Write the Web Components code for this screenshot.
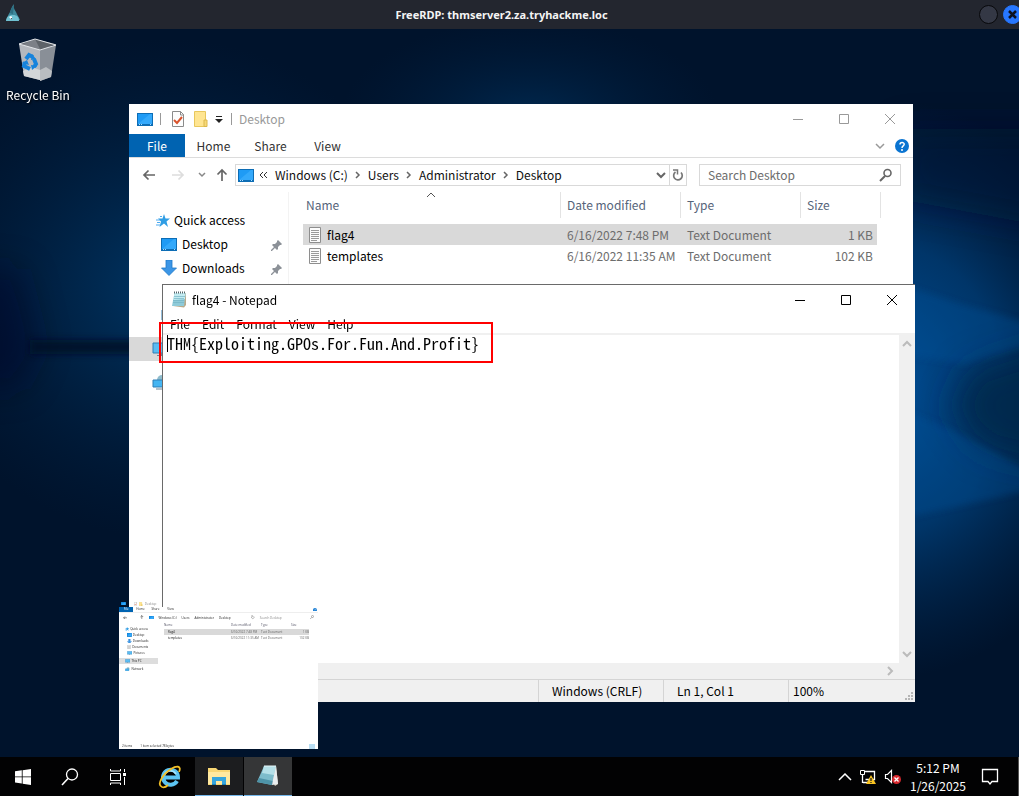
<!DOCTYPE html>
<html lang="en">
<head>
<meta charset="utf-8">
<title>FreeRDP: thmserver2.za.tryhackme.loc</title>
<style>
  html, body { height: 100%; margin: 0; }
  body {
    overflow: hidden;
    font: 12px/16px "Noto Sans CJK SC", "Open Sans", sans-serif;
    color: #000;
    background: #000;
  }
</style>
</head>
<body>
<rdp-session></rdp-session>

<script>
const icons = {
  kali: [16, 18, `<path d="M2 16c0-4 2-6 3-8 1-3 2-6 4-8-1 4 1 6 2 8 1 3 3 5 4 8z" fill="#3f8a9c"/><path d="M5 9c1-4 2-6 4-8 0 4-1 6-1 9z" fill="#2d6f82"/><path d="M1 17c0-4 3-6 7-6s6 2 6 6z" fill="#6fc0d0"/><path d="M4 13l3 3v-3l-1-1z" fill="#fff"/><path d="M6 14l1 2v-2z" fill="#222"/>`],
  bin: [42, 44, `<path d="M3 6L18 1l20 5-14 7z" fill="#5d6268"/><path d="M18 1l6 12-20-6z" fill="#7c8087"/><path d="M2 6l21 6v30L7 38z" fill="#b4b8be"/><path d="M23 12l16-5-5 32-11 4z" fill="#898f97"/><path d="M6 33l8-4 9 3v10L7 38z" fill="#d3d6d8"/><path d="M23 32l6-3 6 4-1 6-11 4z" fill="#b9bdc1"/><path d="M2 6L18 1l21 6-16 5z" fill="none" stroke="#e4e7ea" stroke-width="1"/><g fill="none" stroke="#1683dc" stroke-width="4"><path d="M9 21l3-4 4 2"/><path d="M17 21l2 5-2 3"/><path d="M8 24l-1 4 6 3"/></g><path d="M15 16l4 5-5 1zM20 28l-5 4-1-5zM5 25l5-3 2 5z" fill="#1683dc"/>`],
  desktop: [16, 13, `<path d="M0 0h16v13H0z" fill="#0d6db5"/><path d="M1 1h14v10H1z" fill="#1f9bf5"/><path d="M1 11L13 1h2v10z" fill="#34a9fb"/><path d="M2 11h1v1H2zM4 11h1v1H4zM13 11h1v1h-1z" fill="#a9dcff"/>`],
  check: [14, 16, `<path d="M1.500.5h8l3 3v12h-11z" fill="#fdfdfd" stroke="#8b8b8b"/><path d="M9.500.5v3.500h3.500" fill="none" stroke="#8b8b8b"/><path d="M3 9l3 3 5-6" fill="none" stroke="#d9532c" stroke-width="2"/>`],
  folder: [14, 16, `<path d="M.5.500h11v15H.5z" fill="#ffe591" stroke="#e8c75c"/><path d="M10 9h3v6.500h-3z" fill="#f7d978" stroke="#dcb84d"/>`],
  more: [8, 8, `<path d="M1 1.500h6" stroke="#222"/><path d="M0 4h8L4 8z" fill="#222"/>`],
  min: [12, 12, `<path d="M1 6.500h10" stroke="currentColor"/>`],
  max: [12, 12, `<path d="M1.500 1.500h9v9h-9z" fill="none" stroke="currentColor"/>`],
  close: [12, 12, `<path d="M1 1l10 10M11 1L1 11" stroke="currentColor"/>`],
  back: [14, 12, `<path d="M13 6H2M6.500 1.500L2 6l4.500 4.500" fill="none" stroke="currentColor" stroke-width="1.700"/>`],
  forward: [14, 12, `<path d="M1 6h11M7.500 1.500L12 6l-4.500 4.500" fill="none" stroke="currentColor" stroke-width="1.700"/>`],
  up: [12, 14, `<path d="M6 13V2M1.500 6.500L6 2l4.500 4.500" fill="none" stroke="currentColor" stroke-width="1.700"/>`],
  down: [10, 8, `<path d="M1 2l4 4 4-4" fill="none" stroke="currentColor" stroke-width="2"/>`],
  downThin: [10, 8, `<path d="M1 2l4 4 4-4" fill="none" stroke="currentColor" stroke-width="1.500"/>`],
  recent: [8, 6, `<path d="M1 1l3 3 3-3" fill="none" stroke="currentColor" stroke-width="1.500"/>`],
  right: [6, 8, `<path d="M1 1l3 3-3 3" fill="none" stroke="currentColor" stroke-width="1.500"/>`],
  scrollRight: [8, 10, `<path d="M1 1l4 4-4 4" fill="none" stroke="currentColor" stroke-width="2"/>`],
  scrollUp: [10, 8, `<path d="M1 6l4-4 4 4" fill="none" stroke="currentColor" stroke-width="2"/>`],
  sort: [10, 6, `<path d="M1 5l4-4 4 4" fill="none" stroke="#555"/>`],
  dblLeft: [9, 8, `<path d="M4 1L1 4l3 3M8 1L5 4l3 3" fill="none" stroke="#333"/>`],
  refresh: [12, 14, `<path d="M3.500 4A4.300 4.300 0 1 0 9 4.500" fill="none" stroke="#777" stroke-width="1.700"/><path d="M1 2h4.500v4.500" fill="none" stroke="#777" stroke-width="1.500"/>`],
  search: [14, 14, `<circle cx="8.500" cy="5" r="3.500" fill="none" stroke="#666" stroke-width="1.600"/><path d="M6 8l-5 5" stroke="#666" stroke-width="2"/>`],
  star: [14, 13, `<path d="M8 0l1.500 4.500H14l-3.500 3L12 13 8 9.500 3.500 13 5 7.500 2 4.500h4.500z" fill="#2f9de4"/><path d="M0 6h4M1 8.500h3M0 11h4M4 2.500h2" stroke="#4caaf0"/>`],
  arrow: [16, 16, `<path d="M5 0h6v8h4.500L8 15.500.5 8H5z" fill="#3c96e6" stroke="#1f78c8" stroke-width=".8"/>`],
  pin: [12, 12, `<path d="M7 1l4 4-1 1-1 0-2 2 0 2-1 1-5-5 1-1h2l2-2 0-1z" fill="#8c9198"/><path d="M4 8l-4 4" stroke="#8c9198" stroke-width="1.300"/>`],
  pc: [18, 15, `<path d="M1 1h16v10H1z" fill="#5bbcf2" stroke="#2f7fb6"/><path d="M8 11h2v2H8zM5 13h8v1H5z" fill="#6d8496"/>`],
  network: [18, 16, `<circle cx="10" cy="6" r="5" fill="#8fbccc"/><path d="M1 6h12v7H1z" fill="#45b5f2" stroke="#2f7fb6"/><path d="M4 15h7" stroke="#6d8496"/>`],
  text: [14, 16, `<path d="M1.500.5h11v15h-11z" fill="#fcfcfc" stroke="#8e8e8e"/><path d="M3 3.500h8M3 5.500h8M3 7.500h8M3 9.500h8M3 11.500h8M3 13.500h6" stroke="#9a9a9a"/>`],
  help: [14, 14, `<circle cx="7" cy="7" r="7" fill="#0a74d1"/><path d="M5 5.500C5 3 9.200 3 9.200 5.300 9.200 7 7 6.800 7 9" fill="none" stroke="#fff" stroke-width="1.500"/><circle cx="7" cy="11" r="1" fill="#fff"/>`],
  note: [16, 17, `<path d="M4 2h11v12l-2 2.500L2 15z" fill="#b8a98a"/><path d="M3.500 2h11L13 15H1z" fill="#8fcbd9"/><path d="M3.500 2h11L14 8 2.500 9z" fill="#c3ebf1"/><path d="M3 5.500h11M3 7.500h10M2 9.500h11M2 11.500h11" stroke="#74b4c4" stroke-width=".7"/><path d="M3 1.500h12" stroke="#55656a" stroke-width="2" stroke-dasharray="1 1"/>`],
  windows: [16, 16, `<path d="M0 2.300l6.800-1v6.200H0zM7.600 1.200L16 0v7.500H7.600zM0 8.300h6.800v6.200l-6.800-1zM7.600 8.300H16V16l-8.400-1.200z" fill="#fff"/>`],
  find: [18, 18, `<circle cx="11" cy="6.500" r="5.500" fill="none" stroke="#fff" stroke-width="1.300"/><path d="M7 10.500L1 17" stroke="#fff" stroke-width="1.600"/>`],
  tasks: [18, 16, `<path d="M1.500 4.500h10v7h-10zM1.500 0v2h10V0M1.500 16v-2h10v2M15.500 0v3M15.500 8v8" fill="none" stroke="#fff"/><path d="M14 4h3v3h-3z" fill="#fff"/>`],
  ie: [24, 24, `<path d="M19 16A7.500 7.500 0 1 1 20 12.500H7" fill="none" stroke="#5cc4f2" stroke-width="4"/><path d="M6 11a6.500 6.500 0 0 1 12-2" fill="none" stroke="#a9e4fb" stroke-width="1.500"/><path d="M4 22C-2 20 5 9 13 4c5-3 11-4 8 3M4 22c2 1 5-1 6-2" fill="none" stroke="#f2bf26" stroke-width="1.800"/>`],
  explorer: [24, 20, `<path d="M1 2h8l2 2h12v15H1z" fill="#f8d775"/><path d="M1 6h22v12H1z" fill="#ffe9a0"/><path d="M5 11h14v8h-4v-4H9v4H5z" fill="#35a5dd"/><path d="M5 18h4v1H5zM15 18h4v1h-4z" fill="#1b7fb5"/>`],
  notepad: [24, 24, `<path d="M8 2h12l2 18-3 2z" fill="#d9d3c3"/><path d="M8 2h12l-4 19L1 18z" fill="#7dbccb"/><path d="M8 2h12l-2 9-12-2z" fill="#b5e0e8"/><path d="M3 14l14 3-1 4-15-3z" fill="#4e94a8"/><path d="M20 2l2 18-6 1z" fill="#e9eef0"/><path d="M8 2h12" stroke="#e7f6f8"/>`],
  caret: [14, 8, `<path d="M1 7l6-6 6 6" fill="none" stroke="#fff" stroke-width="1.500"/>`],
  lan: [18, 16, `<path d="M5.500 2.500h10v8h-9M4 13.500h7M3.500 6v8" fill="none" stroke="#fff" stroke-width="1.300"/><path d="M1.500 1.500h4v4h-4z" fill="#000" stroke="#fff"/><path d="M12 6l5 9H7z" fill="#f8c322"/><path d="M12 9v3M12 13v1" stroke="#222" stroke-width="1.300"/>`],
  sound: [18, 16, `<path d="M1.500 5.500h2l4-4v12l-4-4h-2z" fill="none" stroke="#fff" stroke-width="1.200"/><circle cx="12.500" cy="10.500" r="4.500" fill="#d8292f"/><path d="M10.500 8.500l4 4M14.500 8.500l-4 4" stroke="#fff" stroke-width="1.300"/>`],
  notify: [18, 18, `<path d="M1.500 1.500h15v12H11l-2 2.500-2-2.500H1.500z" fill="none" stroke="#fff" stroke-width="1.300"/>`],
  grip: [9, 9, `<path d="M6 0h2v2H6zM3 3h2v2H3zM6 3h2v2H6zM0 6h2v2H0zM3 6h2v2H3zM6 6h2v2H6z" fill="#b5b5b5"/>`],
};

function define(name, html) {
  const template = document.createElement("template");
  template.innerHTML = html;
  customElements.define(name, class extends HTMLElement {
    constructor() {
      super();
      this.attachShadow({ mode: "open" });
      this.shadowRoot.appendChild(template.content.cloneNode(true));
    }
  });
}

class UiIcon extends HTMLElement {
  constructor() {
    super();
    this.attachShadow({ mode: "open" });
  }

  connectedCallback() {
    const [w, h, body] = icons[this.getAttribute("name")];
    const scale = Number(this.getAttribute("scale") || 1);
    this.shadowRoot.innerHTML = `
      <style>:host { display: inline-flex; flex: none; } svg { display: block; }</style>
      <svg width="${w * scale}" height="${h * scale}" viewBox="0 0 ${w} ${h}" aria-hidden="true">${body}</svg>`;
  }
}
customElements.define("ui-icon", UiIcon);

define("desktop-wallpaper", `
<style>
  :host { display: block; overflow: hidden; background: #00132c; }
  svg { display: block; width: 100%; height: 100%; }
</style>
<svg viewBox="0 0 1019 728" preserveAspectRatio="none" aria-hidden="true">
  <defs>
    <radialGradient id="r"><stop offset="0" stop-color="#005099"/><stop offset=".5" stop-color="#003e78" stop-opacity=".8"/><stop offset="1" stop-color="#002a55" stop-opacity="0"/></radialGradient>
    <radialGradient id="l"><stop offset="0" stop-color="#003767"/><stop offset="1" stop-color="#002347" stop-opacity="0"/></radialGradient>
    <filter id="soft" x="-50%" y="-50%" width="200%" height="200%"><feGaussianBlur stdDeviation="16"/></filter>
    <filter id="edge" x="-20%" y="-50%" width="140%" height="200%"><feGaussianBlur stdDeviation="3"/></filter>
  </defs>
  <ellipse cx="170" cy="260" rx="260" ry="250" fill="url(#l)"/>
  <ellipse cx="530" cy="90" rx="190" ry="100" fill="url(#l)" opacity=".6"/>
  <ellipse cx="880" cy="360" rx="250" ry="290" fill="url(#r)"/>
  <g filter="url(#soft)">
    <path d="M-40 240h60l20 80-20 40h-60z" fill="#001026" opacity=".4"/>
    <path d="M1060 310l-90 30-20 40 30 40 80 20z" fill="#002448" opacity=".8"/>
    <path d="M1060 100h-160v70l160 30z" fill="#001a38" opacity=".5"/>
  </g>
  <g filter="url(#edge)">
    <path d="M30 311h110v14H30z" fill="#001026" opacity=".8"/>
    <path d="M900 255l60 20 65 18v24l-60 18-65-10z" fill="#00579f" opacity=".3"/>
    <path d="M900 380l50 20 75 40v22l-125 28z" fill="#00579f" opacity=".3"/>
  </g>
</svg>`);

define("rdp-bar", `
<style>
  :host {
    display: flex;
    align-items: center;
    height: 29px;
    background: #23262f;
    color: #f4f4f4;
    font: bold 11px/16px "Noto Sans", sans-serif;
  }
  .logo { width: 19px; padding-left: 5px; }
  h1 { flex: 1; margin: 0; font: inherit; text-align: center; }
  .buttons { display: flex; gap: 5px; width: 40px; overflow: hidden; }
  button {
    display: grid;
    place-items: center;
    flex: none;
    width: 19px;
    height: 19px;
    padding: 0;
    border: 1px solid #08090c;
    border-radius: 50%;
    background: #343845;
  }
  .close { border-color: #2777ff; background: #2777ff; }
</style>
<div class="logo"><ui-icon name="kali"></ui-icon></div>
<h1>FreeRDP: thmserver2.za.tryhackme.loc</h1>
<div class="buttons">
  <button aria-label="Maximize"></button>
  <button class="close" aria-label="Close">
    <svg width="9" height="9" viewBox="0 0 9 9"><path d="M1 1l7 7M8 1L1 8" stroke="#0c1222" stroke-width="2.500"/></svg>
  </button>
</div>`);

define("desktop-icon", `
<style>
  :host { display: flex; flex-direction: column; align-items: center; gap: 5px; width: 76px; color: #fff; text-shadow: 1px 1px 2px #000; }
</style>
<ui-icon name="bin"></ui-icon>
<slot></slot>`);

define("window-buttons", `
<style>
  :host { display: flex; color: #000; }
  button { display: grid; place-items: center; width: 46px; height: 29px; padding: 0; border: 0; background: none; color: inherit; }
</style>
<button aria-label="Minimize"><ui-icon name="min"></ui-icon></button>
<button aria-label="Maximize"><ui-icon name="max"></ui-icon></button>
<button aria-label="Close"><ui-icon name="close"></ui-icon></button>`);

define("nav-item", `
<style>
  :host { display: flex; align-items: center; gap: 5px; height: 24px; padding: 0 5px 0 32px; }
  :host([top]) { gap: 4px; padding-left: 27px; }
  :host([device]) { padding-left: 23px; }
  :host([selected]) { background: #d9d9d9; }
  .label { flex: 1; }
  .pin { display: none; }
  :host([pinned]) .pin { display: block; height: 12px; }
</style>
<slot name="icon"></slot>
<span class="label"><slot></slot></span>
<span class="pin"><ui-icon name="pin"></ui-icon></span>`);

define("address-bar", `
<style>
  :host { display: flex; align-items: center; height: 34px; padding: 0 12px 0 13px; color: #666; }
  button { display: grid; place-items: center; padding: 0; border: 0; background: none; color: inherit; font: inherit; }
  .go { width: 14px; }
  .fwd { width: 14px; margin-left: 15px; color: #ddd; }
  .recent { width: 8px; margin-left: 13px; color: #888; }
  .up { width: 12px; margin-left: 10px; }
  .path {
    display: flex;
    align-items: center;
    flex: 1;
    box-sizing: border-box;
    height: 22px;
    margin: 0 12px 0 7px;
    padding-left: 2px;
    border: 1px solid #d9d9d9;
  }
  .path nav { display: flex; align-items: center; flex: 1; gap: 7px; margin-left: 5px; }
  .path a { color: #111; text-decoration: none; }
  .drop { width: 16px; }
  .reload { width: 17px; height: 20px; border-left: 1px solid #d9d9d9; }
  .search { display: flex; align-items: center; box-sizing: border-box; width: 202px; height: 22px; padding: 0 7px 0 8px; border: 1px solid #d9d9d9; }
  input { flex: 1; min-width: 0; padding: 0; border: 0; outline: 0; background: none; font: inherit; }
  input::placeholder { color: #6d6d6d; opacity: 1; }
</style>
<button class="go" aria-label="Back"><ui-icon name="back"></ui-icon></button>
<button class="fwd" aria-label="Forward"><ui-icon name="forward"></ui-icon></button>
<button class="recent" aria-label="Recent locations"><ui-icon name="recent"></ui-icon></button>
<button class="up" aria-label="Up"><ui-icon name="up"></ui-icon></button>
<div class="path">
  <ui-icon name="desktop"></ui-icon>
  <nav aria-label="Path">
    <ui-icon name="dblLeft"></ui-icon>
    <a href="#c">Windows (C:)</a>
    <ui-icon name="right"></ui-icon>
    <a href="#users">Users</a>
    <ui-icon name="right"></ui-icon>
    <a href="#administrator">Administrator</a>
    <ui-icon name="right"></ui-icon>
    <a href="#desktop">Desktop</a>
  </nav>
  <button class="drop" aria-label="Previous locations"><ui-icon name="down"></ui-icon></button>
  <button class="reload" aria-label="Refresh"><ui-icon name="refresh"></ui-icon></button>
</div>
<div class="search">
  <input type="search" aria-label="Search Desktop" placeholder="Search Desktop">
  <ui-icon name="search"></ui-icon>
</div>`);

define("file-list", `
<style>
  :host { display: block; }
  table { width: 100%; border-collapse: separate; border-spacing: 0; table-layout: fixed; color: #6d6d6d; }
  th, td { padding: 0 6px; text-align: left; font-weight: normal; white-space: nowrap; }
  th { position: relative; height: 26px; border-right: 1px solid #e3e3e3; color: #56647a; }
  th:first-child { padding-left: 3px; }
  th ui-icon { position: absolute; top: 0; left: 50%; margin-left: -6px; }
  .date, .type { width: 107px; }
  .size { width: 67px; }
  tbody::before { content: ""; display: block; height: 6px; }
  td { height: 21px; }
  td:first-child { padding-left: 5px; color: #000; }
  td:last-child { padding-right: 4px; border-right: 4px solid transparent; background-clip: padding-box; text-align: right; }
  .selected td { background-color: #d9d9d9; }
  .name { display: flex; align-items: center; gap: 5px; }
</style>
<table>
  <thead>
    <tr><th>Name<ui-icon name="sort"></ui-icon></th><th class="date">Date modified</th><th class="type">Type</th><th class="size">Size</th></tr>
  </thead>
  <tbody>
    <tr class="selected"><td><span class="name"><ui-icon name="text"></ui-icon>flag4</span></td><td>6/16/2022 7:48 PM</td><td>Text Document</td><td>1 KB</td></tr>
    <tr><td><span class="name"><ui-icon name="text"></ui-icon>templates</span></td><td>6/16/2022 11:35 AM</td><td>Text Document</td><td>102 KB</td></tr>
  </tbody>
</table>`);

define("explorer-window", `
<style>
  :host { display: flex; flex-direction: column; background: #fff; }
  header { display: flex; height: 30px; color: #999; }
  window-buttons { color: #999; }
  .quick { display: flex; align-items: center; flex: 1; padding-left: 8px; }
  .rule { width: 1px; height: 12px; margin: 0 10px 0 7px; background: #999; }
  .quick ui-icon + ui-icon { margin-left: 9px; }
  .quick .last { margin-left: 7px; }
  .last + .rule { margin: 0 7px 0 8px; }
  .tabs { display: flex; align-items: center; height: 23px; border-bottom: 1px solid #dcdcdc; color: #333; }
  .tabs button { height: 23px; padding: 0; border: 0; background: none; color: inherit; font: inherit; width: 57px; }
  .tabs .file { width: 56px; background: #0063b1; color: #fff; }
  .tabs .end { display: flex; align-items: center; gap: 10px; margin: 0 4px 0 auto; color: #999; }
  .main { display: flex; flex: 1; }
  aside { width: 159px; padding-top: 16px; border-right: 1px solid #f3f3f3; }
  aside hr { height: 9px; margin: 0; border: 0; }
  file-list { flex: 1; margin: 0 32px 0 14px; }
</style>
<header>
  <div class="quick">
    <ui-icon name="desktop"></ui-icon><span class="rule"></span>
    <ui-icon name="check"></ui-icon><ui-icon name="folder"></ui-icon><ui-icon class="last" name="more"></ui-icon>
    <span class="rule"></span><span>Desktop</span>
  </div>
  <window-buttons></window-buttons>
</header>
<div class="tabs">
  <button class="file">File</button><button>Home</button><button>Share</button><button>View</button>
  <div class="end"><ui-icon name="downThin"></ui-icon><ui-icon name="help"></ui-icon></div>
</div>
<address-bar></address-bar>
<div class="main">
  <aside>
    <nav-item top><ui-icon slot="icon" name="star"></ui-icon>Quick access</nav-item>
    <nav-item pinned><ui-icon slot="icon" name="desktop"></ui-icon>Desktop</nav-item>
    <nav-item pinned><ui-icon slot="icon" name="arrow"></ui-icon>Downloads</nav-item>
    <nav-item><ui-icon slot="icon" name="text"></ui-icon></nav-item>
    <nav-item><ui-icon slot="icon" name="pc"></ui-icon></nav-item>
    <hr>
    <nav-item device selected><ui-icon slot="icon" name="pc"></ui-icon></nav-item>
    <hr>
    <nav-item device><ui-icon slot="icon" name="network"></ui-icon></nav-item>
  </aside>
  <file-list></file-list>
</div>`);

define("notepad-window", `
<style>
  :host { display: flex; flex-direction: column; box-sizing: border-box; border: solid #6a6a6a; border-width: 1px 0 0 1px; background: #fff; }
  header { display: flex; align-items: center; height: 29px; }
  .title { display: flex; align-items: center; gap: 5px; flex: 1; padding-left: 8px; }
  .menu { display: flex; height: 19px; border-bottom: 2px solid #f0f0f0; }
  .menu button { padding: 0 6px; border: 0; background: none; font: inherit; line-height: 20px; }
  .menu button:first-child { padding-left: 7px; }
  .edit { display: flex; flex: 1; position: relative; }
  textarea {
    flex: 1;
    min-width: 0;
    box-sizing: border-box;
    padding: 0 4px;
    border: 0;
    outline: 0;
    resize: none;
    overflow: hidden;
    font: 16px/16px "Noto Sans Mono CJK SC", monospace;
    color: #000;
    background: none;
  }
  .caret { position: absolute; top: 0; left: 4px; width: 1px; height: 17px; background: #000; }
  .vbar { display: flex; flex-direction: column; align-items: center; justify-content: space-between; width: 16px; padding: 5px 0; box-sizing: border-box; background: #f0f0f0; color: #bbb; }
  .hbar { display: flex; align-items: center; justify-content: flex-end; height: 16px; padding-right: 20px; background: #f0f0f0; color: #bbb; }
  footer { display: flex; height: 22px; border-top: 1px solid #d4d4d4; background: #f0f0f0; line-height: 22px; position: relative; }
  footer .fill { flex: 1; }
  footer span { box-sizing: border-box; width: 125px; padding-left: 13px; border-left: 1px solid #d4d4d4; }
  footer .zoom { width: 127px; padding-left: 4px; }
  .grip { position: absolute; right: 1px; bottom: 1px; }
</style>
<header>
  <div class="title"><ui-icon name="note"></ui-icon>flag4 - Notepad</div>
  <window-buttons></window-buttons>
</header>
<div class="menu"><button>File</button><button>Edit</button><button>Format</button><button>View</button><button>Help</button></div>
<div class="edit">
  <textarea aria-label="Text" spellcheck="false">THM{Exploiting.GPOs.For.Fun.And.Profit}</textarea>
  <i class="caret"></i>
  <div class="vbar"><ui-icon name="scrollUp"></ui-icon><ui-icon name="down"></ui-icon></div>
</div>
<div class="hbar"><ui-icon name="scrollRight"></ui-icon></div>
<footer>
  <div class="fill"></div><span>Windows (CRLF)</span><span>Ln 1, Col 1</span><span class="zoom">100%</span>
  <ui-icon class="grip" name="grip"></ui-icon>
</footer>`);

define("window-preview", `
<style>
  :host { display: flex; flex-direction: column; font: 3px/6px "Open Sans", sans-serif; color: #222; }
  .title { display: flex; align-items: center; gap: 2px; height: 7px; padding-left: 2px; color: #888; }
  .title .gap { width: 4px; }
  .body { display: flex; flex-direction: column; flex: 1; background: #fff; }
  .row { display: flex; align-items: center; }
  .tabs { height: 5px; border-bottom: 1px solid #eee; line-height: 5px; }
  .tabs b { width: 14px; height: 5px; background: #0063b1; color: #fff; font-weight: normal; text-align: center; }
  .tabs span { width: 15px; text-align: center; }
  .tabs ui-icon { margin: 0 1px 0 auto; }
  .path { gap: 5px; height: 9px; padding: 0 4px; }
  .path .up { margin-left: 8px; }
  .path .fill { flex: 1; }
  .path .find { width: 45px; color: #888; }
  .main { display: flex; flex: 1; }
  .side { width: 39px; padding-top: 4px; }
  .side div { display: flex; align-items: center; gap: 1px; height: 6px; padding-left: 8px; }
  .side .top { padding-left: 6px; }
  .side .pc { height: 6px; margin: 2px 0; background: #ddd; }
  table { flex: 1; align-self: flex-start; margin: 0 9px 0 6px; border-spacing: 0; table-layout: fixed; color: #666; }
  th, td { height: 6px; padding: 0; text-align: left; font-weight: normal; }
  th { color: #556; padding-bottom: 1px; }
  td:first-child { padding-left: 4px; color: #111; }
  td:last-child { text-align: right; }
  .selected { background: #d9d9d9; }
  .status { gap: 8px; height: 6px; padding: 0 3px; }
  .status i { width: 6px; height: 5px; margin-left: auto; background: #b9def3; }
</style>
<div class="title"><ui-icon name="desktop" scale=".3"></ui-icon><span class="gap"></span><ui-icon name="check" scale=".25"></ui-icon><ui-icon name="folder" scale=".25"></ui-icon><span>Desktop</span></div>
<div class="body">
  <div class="row tabs"><b>File</b><span>Home</span><span>Share</span><span>View</span><ui-icon name="help" scale=".28"></ui-icon></div>
  <div class="row path">
    <ui-icon name="back" scale=".3"></ui-icon><ui-icon class="up" name="up" scale=".3"></ui-icon><ui-icon name="desktop" scale=".3"></ui-icon>
    <span>Windows (C:)</span><span>Users</span><span>Administrator</span><span>Desktop</span>
    <span class="fill"></span><ui-icon name="refresh" scale=".3"></ui-icon><span class="find">Search Desktop</span><ui-icon name="search" scale=".3"></ui-icon>
  </div>
  <div class="main">
    <div class="side">
      <div class="top"><ui-icon name="star" scale=".3"></ui-icon>Quick access</div>
      <div><ui-icon name="desktop" scale=".3"></ui-icon>Desktop</div>
      <div><ui-icon name="arrow" scale=".3"></ui-icon>Downloads</div>
      <div><ui-icon name="text" scale=".3"></ui-icon>Documents</div>
      <div><ui-icon name="pc" scale=".3"></ui-icon>Pictures</div>
      <div class="top pc"><ui-icon name="pc" scale=".3"></ui-icon>This PC</div>
      <div class="top"><ui-icon name="network" scale=".3"></ui-icon>Network</div>
    </div>
    <table>
      <tr><th>Name</th><th width="30">Date modified</th><th width="30">Type</th><th width="18">Size</th></tr>
      <tr class="selected"><td>flag4</td><td>6/16/2022 7:48 PM</td><td>Text Document</td><td>1 KB</td></tr>
      <tr><td>templates</td><td>6/16/2022 11:35 AM</td><td>Text Document</td><td>102 KB</td></tr>
    </table>
  </div>
  <div class="row status"><span>2 items</span><span>1 item selected 78 bytes</span><i></i></div>
</div>`);

define("task-bar", `
<style>
  :host { display: flex; height: 39px; background: #020203; color: #fff; }
  button { display: grid; place-items: center; box-sizing: border-box; width: 48px; padding: 0; border: 0; background: none; color: inherit; font: inherit; }
  .start { width: 46px; }
  .ie { margin-left: 4px; }
  .open, .active { margin-left: 1px; background: #1c1d1f; border-bottom: 1px solid #76b9ed; }
  .active { background: #353637; }
  .tray { display: flex; align-items: center; gap: 7px; margin-left: auto; }
  .clock { width: 58px; line-height: 18px; text-align: center; }
  .peek { width: 5px; height: 39px; border-right: 1px solid #555; }
  .notify { width: 32px; }
</style>
<button class="start" aria-label="Start"><ui-icon name="windows"></ui-icon></button>
<button aria-label="Search"><ui-icon name="find"></ui-icon></button>
<button aria-label="Task View"><ui-icon name="tasks"></ui-icon></button>
<button class="ie" aria-label="Internet Explorer"><ui-icon name="ie"></ui-icon></button>
<button class="open" aria-label="File Explorer"><ui-icon name="explorer"></ui-icon></button>
<button class="active" aria-label="Notepad"><ui-icon name="notepad"></ui-icon></button>
<div class="tray">
  <ui-icon name="caret"></ui-icon>
  <ui-icon name="lan"></ui-icon>
  <ui-icon name="sound"></ui-icon>
  <div class="clock">5:12 PM<br>1/26/2025</div>
  <button class="notify" aria-label="Notifications"><ui-icon name="notify"></ui-icon></button>
  <span class="peek"></span>
</div>`);

// windows sit freely on the desktop, sized by their insets
define("rdp-session", `
<style>
  :host { display: flex; flex-direction: column; height: 100vh; }
  main { position: relative; flex: 1; overflow: hidden; }
  main > * { position: absolute; }
  desktop-wallpaper { inset: 0; }
  desktop-icon { top: 9px; left: 0; }
  explorer-window { inset: 75px 106px 57px 129px; }
  notepad-window { inset: 255px 104px 55px 162px; }
  window-preview { left: 119px; bottom: 8px; width: 199px; height: 149px; }
  .marker { top: 293px; left: 159px; box-sizing: border-box; width: 334px; height: 41px; border: 2px solid #f00; }
</style>
<rdp-bar></rdp-bar>
<main>
  <desktop-wallpaper></desktop-wallpaper>
  <desktop-icon>Recycle Bin</desktop-icon>
  <explorer-window></explorer-window>
  <notepad-window></notepad-window>
  <window-preview></window-preview>
  <div class="marker"></div>
</main>
<task-bar></task-bar>`);
</script>
</body>
</html>
